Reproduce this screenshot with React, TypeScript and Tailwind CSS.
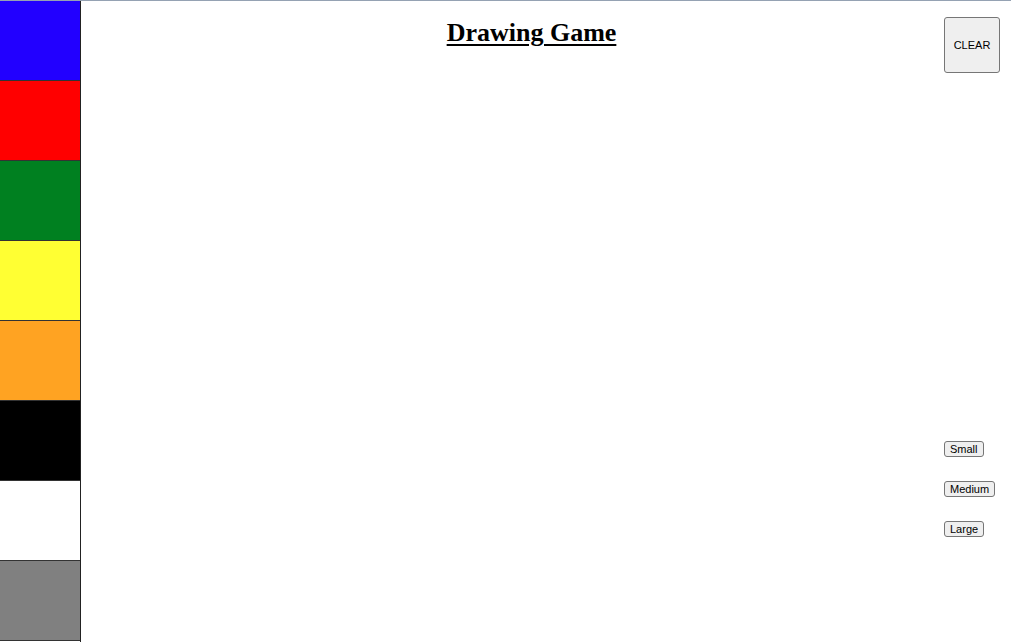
import React from "react";

const swatches = [
  { id: "blue", bg: "bg-[#2200ff]" },
  { id: "red", bg: "bg-[#ff0000]" },
  { id: "green", bg: "bg-[#008020]" },
  { id: "yellow", bg: "bg-[#ffff33]" },
  { id: "orange", bg: "bg-[#ffa322]" },
  { id: "black", bg: "bg-[#000000]" },
  { id: "white", bg: "bg-white" },
  { id: "gray", bg: "bg-[#808080]" },
];

const sizes = ["Small", "Medium", "Large"];

const btn =
  "bg-[#efefef] border border-[#767676] rounded-[3px] text-black font-['Liberation_Sans',Arial,sans-serif]";

export default function App() {
  return (
    <div className="w-[1011px] h-[642px] bg-white overflow-hidden flex flex-col">
      <div className="h-px w-full bg-[#95a2b3]" />
      <div className="flex flex-1 min-h-0">
        <div className="w-[81px] flex flex-col border-r border-[#222]">
          {swatches.map((s) => (
            <div
              key={s.id}
              className={`h-[80px] w-full border-b border-[#333] ${s.bg}`}
            />
          ))}
        </div>
        <div className="flex-1 pl-[38px] pt-[17px] text-center">
          <h1 className="font-['Liberation_Serif','Times_New_Roman',serif] font-bold text-[26px] leading-[30px] underline decoration-2 underline-offset-[3px] text-black">
            Drawing Game
          </h1>
        </div>
        <div className="w-[67px] flex flex-col items-start pt-[16px]">
          <button className={`${btn} w-[56px] h-[56px] text-[11px]`}>CLEAR</button>
          <div className="mt-[368px] flex flex-col items-start gap-[24px]">
            {sizes.map((s) => (
              <button
                key={s}
                className={`${btn} h-[16px] px-[5px] text-[11px] leading-[14px]`}
              >
                {s}
              </button>
            ))}
          </div>
        </div>
      </div>
    </div>
  );
}
